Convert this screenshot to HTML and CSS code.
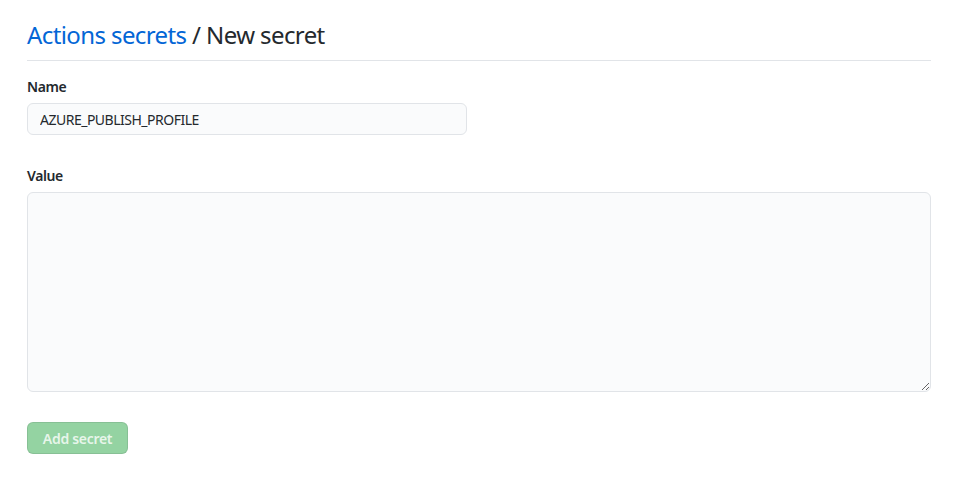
FILE: index.html
```html
<!DOCTYPE html>
<html lang="en">
<head>
<meta charset="utf-8">
<title>New secret</title>
<link rel="stylesheet" href="styles.css">
</head>
<body>
<main class="page">
  <div class="subhead">
    <h2 class="subhead-heading"><a class="crumb" href="#">Actions secrets</a> / New secret</h2>
  </div>
  <form class="secret-form">
    <div class="form-group">
      <label class="form-label" for="name">Name</label>
      <input class="form-input" id="name" type="text" value="AZURE_PUBLISH_PROFILE">
    </div>
    <div class="form-group form-group-value">
      <label class="form-label" for="value">Value</label>
      <textarea class="form-textarea" id="value"></textarea>
    </div>
    <button class="btn-primary" type="button" disabled>Add secret</button>
  </form>
</main>
</body>
</html>
```

FILE: styles.css
```css
html, body {
  margin: 0;
  padding: 0;
  background: #ffffff;
}
body {
  font-family: "Segoe UI", "Noto Sans", "Open Sans", sans-serif;
  color: #24292e;
  font-size: 14px;
}
.page {
  padding: 17px 24px 0 27px;
}
.subhead {
  border-bottom: 1px solid #e1e4e8;
  padding-bottom: 7px;
}
.subhead-heading {
  margin: 0;
  font-size: 24px;
  font-weight: 400;
  line-height: 36px;
  letter-spacing: -0.6px;
}
.crumb {
  color: #0366d6;
  text-decoration: none;
}
.secret-form {
  display: flex;
  flex-direction: column;
  align-items: flex-start;
  padding-top: 16px;
}
.form-group {
  display: flex;
  flex-direction: column;
  align-items: stretch;
}
.form-group-value {
  align-self: stretch;
  margin-top: 31px;
}
.form-label {
  font-weight: 600;
  font-size: 14px;
  line-height: 20px;
  margin-bottom: 6px;
  letter-spacing: -0.4px;
}
.form-input,
.form-textarea {
  box-sizing: border-box;
  font-family: inherit;
  font-size: 14px;
  color: #24292e;
  background: #fafbfc;
  border: 1px solid #e1e4e8;
  border-radius: 6px;
  outline: none;
}
.form-input {
  width: 440px;
  height: 32px;
  padding: 5px 12px;
  line-height: 20px;
  letter-spacing: -0.5px;
}
.form-textarea {
  width: 100%;
  height: 200px;
  padding: 8px 12px;
  resize: vertical;
  display: block;
}
.btn-primary {
  margin-top: 30px;
  box-sizing: border-box;
  width: 101px;
  height: 32px;
  font-family: inherit;
  font-size: 14px;
  font-weight: 600;
  letter-spacing: -0.3px;
  color: rgba(255, 255, 255, 0.8);
  background: #94d3a2;
  border: 1px solid rgba(27, 31, 35, 0.1);
  border-radius: 6px;
  padding: 0;
}
```
